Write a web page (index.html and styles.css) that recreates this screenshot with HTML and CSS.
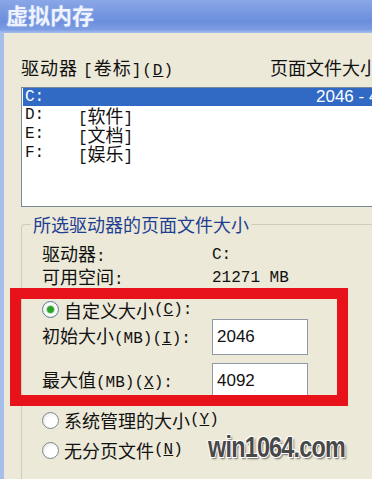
FILE: index.html
```html
<!DOCTYPE html>
<html lang="zh-CN">
<head>
  <meta charset="UTF-8">
  <title>虚拟内存</title>
  <link rel="stylesheet" href="styles.css">
</head>
<body>
  <div class="window">
    <div class="titlebar">虚拟内存</div>

    <div class="content">
      <div class="list-head">
        <span>驱动器 <span class="m">[</span>卷标<span class="m">](<u>D</u>)</span></span>
        <span>页面文件大小 <span class="m">(MB)</span></span>
      </div>

      <div class="listbox">
        <div class="row selected"><span class="m">C:</span><span></span><span class="num">2046 - 4092</span></div>
        <div class="row"><span class="m">D:</span><span><span class="m">[</span>软件<span class="m">]</span></span><span></span></div>
        <div class="row"><span class="m">E:</span><span><span class="m">[</span>文档<span class="m">]</span></span><span></span></div>
        <div class="row"><span class="m">F:</span><span><span class="m">[</span>娱乐<span class="m">]</span></span><span></span></div>
      </div>

      <fieldset class="group">
        <legend>所选驱动器的页面文件大小</legend>

        <div class="field"><span>驱动器<span class="m">:</span></span><span class="m">C:</span></div>
        <div class="field"><span>可用空间<span class="m">:</span></span><span class="m">21271 MB</span></div>

        <div class="radio checked"><span class="dot"></span>自定义大小<span class="m">(<u>C</u>):</span></div>
        <div class="field input-row"><span>初始大小<span class="m">(MB)(<u>I</u>):</span></span><span class="box">2046</span></div>
        <div class="field input-row second"><span>最大值<span class="m">(MB)(<u>X</u>):</span></span><span class="box">4092</span></div>

        <div class="radio other"><span class="dot"></span>系统管理的大小<span class="m">(<u>Y</u>)</span></div>
        <div class="radio last"><span class="dot"></span>无分页文件<span class="m">(<u>N</u>)</span></div>
      </fieldset>
    </div>

    <!-- 红框标注 -->
    <div class="mark"></div>
    <div class="watermark">win1064.com</div>
  </div>
</body>
</html>
```

FILE: styles.css
```css
/* XP 虚拟内存对话框 */
* {
  box-sizing: border-box;
}

body {
  margin: 0;
  background-color: #ece9d8;
  font-family: "Noto Sans CJK SC", sans-serif;
  font-size: 18px;
  color: #111;
  overflow: hidden;
}

u {
  text-decoration: underline;
}

.m {
  font-family: "Liberation Mono", "Noto Sans CJK SC", monospace;
  font-size: 16px;
}

.window {
  position: relative;
  width: 440px;
  height: 479px;
  overflow: hidden;
}

.titlebar {
  height: 33px;
  line-height: 29px;
  padding-left: 6px;
  font-size: 22px;
  font-weight: bold;
  color: #eef3ff;
  text-shadow: 0 0 2px #9fb6ec;
  background: linear-gradient(#8aa7e7, #6b8edc 65%, #7d9de2 90%, #a9bff0);
}

.content {
  height: 446px;
  border-left: 4px solid #a7bdec;
  padding: 24px 0 0 17px;
}

.list-head {
  display: grid;
  grid-template-columns: 249px auto;
  line-height: 20px;
  margin-bottom: 6px;
  white-space: nowrap;
}

.list-head > span:first-child {
  letter-spacing: 1px;
}

.listbox {
  height: 120px;
  border: 1px solid #7b8896;
  border-right: none;
  background-color: #fff;
  padding: 0 0 0 1px;
}

.row {
  display: grid;
  grid-template-columns: 53px 238px auto;
  height: 19px;
  line-height: 18px;
  padding-left: 2px;
  white-space: nowrap;
}

.row span {
  line-height: 18px;
}

.row.selected {
  height: 18px;
  background-color: #316ac5;
  color: #fff;
}

.num {
  font-family: "Liberation Sans", sans-serif;
  font-size: 17px;
}

.group {
  margin: 7px 0 0;
  padding: 8px 0 40px 20px;
  border: 1px solid #cfccb9;
  border-right: none;
  border-radius: 4px 0 0 0;
  min-width: 0;
}

.group legend {
  margin-left: -11px;
  padding: 0 2px;
  line-height: 20px;
  color: #1f3f92;
}

.field {
  display: grid;
  grid-template-columns: 170px 96px;
  align-items: center;
  height: 23px;
  line-height: 22px;
  white-space: nowrap;
}

.input-row {
  height: 36px;
}

.input-row.second {
  margin-top: 8px;
}

.box {
  height: 36px;
  border: 1px solid #8e9aa6;
  background-color: #fff;
  padding-left: 4px;
  line-height: 34px;
  font-family: "Liberation Sans", sans-serif;
  font-size: 17px;
}

.radio {
  display: flex;
  align-items: center;
  height: 22px;
  line-height: 20px;
  white-space: nowrap;
}

.radio.checked {
  height: 19px;
  margin-top: 12px;
}

.radio.other {
  margin-top: 10px;
}

.radio.last {
  margin-top: 8px;
}

.dot {
  flex: none;
  width: 17px;
  height: 17px;
  margin-right: 5px;
  border: 1px solid #7c8890;
  border-radius: 50%;
  background: radial-gradient(circle at 60% 60%, #fff 40%, #dcdcd6 100%);
}

.radio.checked .dot {
  border-color: #5d7f8f;
  background: radial-gradient(circle, #2aa32a 0 3px, #bfe3b9 4px, #fff 5px, #e0e0da 100%);
}

/* 标注和水印压在对话框上面 */
.mark {
  position: absolute;
  left: 10px;
  top: 288px;
  width: 338px;
  height: 118px;
  border: 11px solid #e8131a;
}

.watermark {
  position: absolute;
  left: 208px;
  top: 430px;
  font-family: "Liberation Sans", sans-serif;
  font-size: 30px;
  font-weight: bold;
  letter-spacing: -1px;
  color: #484848;
  transform: scaleX(0.78);
  transform-origin: left center;
  text-shadow: -1px -1px 0 #fff, 1px -1px 0 #fff, -1px 1px 0 #fff, 1px 1px 0 #fff, 2px 2px 2px #666;
}
```
